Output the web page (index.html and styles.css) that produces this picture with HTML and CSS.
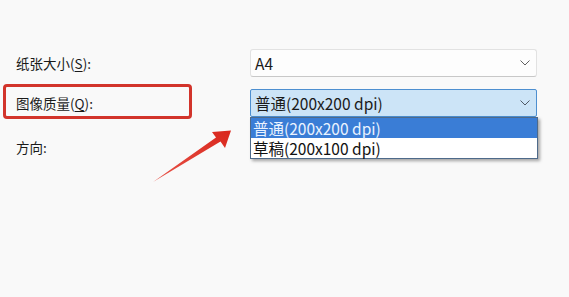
FILE: index.html
```html
<!DOCTYPE html>
<html lang="zh-CN">
<head>
<meta charset="utf-8">
<title>打印设置</title>
<link rel="stylesheet" href="styles.css">
</head>
<body>
<div class="page">
  <div class="form">
    <div class="label">纸张大小(<u>S</u>):</div>
    <div class="combo">
      <span class="value">A4</span>
      <svg class="chev" width="10" height="6" viewBox="0 0 10 6"><path d="M0.5 0.5 L5 5 L9.5 0.5" fill="none" stroke="#606060" stroke-width="1"/></svg>
    </div>
    <div class="label">图像质量(<u>Q</u>):</div>
    <div class="combo open">
      <span class="value">普通(200x200 dpi)</span>
      <svg class="chev" width="10" height="6" viewBox="0 0 10 6"><path d="M0.5 0.5 L5 5 L9.5 0.5" fill="none" stroke="#505a66" stroke-width="1"/></svg>
    </div>
    <div class="label lower">方向:</div>
    <div class="combo">
      <span class="value"></span>
      <svg class="chev" width="10" height="6" viewBox="0 0 10 6"><path d="M0.5 0.5 L5 5 L9.5 0.5" fill="none" stroke="#606060" stroke-width="1"/></svg>
    </div>
  </div>

  <div class="highlight-box"></div>

  <ul class="dropdown">
    <li class="item selected">普通(200x200 dpi)</li>
    <li class="item">草稿(200x100 dpi)</li>
  </ul>

  <svg class="arrow" width="100" height="60" viewBox="150 128 100 60">
    <defs>
      <linearGradient id="ag" x1="0" y1="1" x2="1" y2="0">
        <stop offset="0" stop-color="#e8554a"/>
        <stop offset="1" stop-color="#d9261c"/>
      </linearGradient>
    </defs>
    <polygon points="153,182 216,137.5 212,132 231,130.5 225,148 220.5,141.5" fill="url(#ag)"/>
  </svg>
</div>
</body>
</html>
```

FILE: styles.css
```css
html, body {
  margin: 0;
  padding: 0;
  background: #f9f9f9;
}

body {
  font-family: "Noto Sans CJK SC", "Noto Sans", sans-serif;
  color: #1b1b1b;
}

.page {
  position: relative;
  width: 569px;
  height: 297px;
  overflow: hidden;
}

.form {
  display: grid;
  grid-template-columns: 234px 287px;
  grid-auto-rows: 28px;
  row-gap: 12px;
  padding: 49px 0 0 16px;
}

.label {
  font-size: 13.5px;
  line-height: 28px;
  color: #1a1a1a;
  white-space: nowrap;
}

.label.lower {
  padding-top: 4px;
}

.label u {
  text-decoration-thickness: 1px;
  text-underline-offset: 2px;
}

.combo {
  box-sizing: border-box;
  display: flex;
  align-items: center;
  justify-content: space-between;
  padding: 0 6px 0 4px;
  background: #fdfdfd;
  border: 1px solid #e2e2e2;
  border-bottom-color: #c8c8c8;
  border-radius: 3px;
  font-size: 15.5px;
  line-height: 26px;
  color: #1a1a1a;
}

.combo.open {
  background: #cce4f7;
  border-color: #4d8fd0;
  border-radius: 2px;
}

.chev {
  display: block;
  flex: none;
}

.highlight-box {
  position: absolute;
  left: 3px;
  top: 84px;
  width: 189px;
  height: 35px;
  box-sizing: border-box;
  border: 3px solid #d2342b;
  border-radius: 4px;
}

.dropdown {
  position: absolute;
  left: 250px;
  top: 117px;
  width: 288px;
  box-sizing: border-box;
  margin: 0;
  padding: 0;
  list-style: none;
  background: #ffffff;
  border: 1px solid #4e6a8a;
  box-shadow: 2px 2px 3px rgba(0, 0, 0, 0.35);
}

.item {
  height: 20px;
  padding: 0 2px;
  font-size: 15.5px;
  line-height: 20px;
  color: #111;
  white-space: nowrap;
}

.item.selected {
  background: #3a7dd6;
  color: #eaf3ff;
}

.arrow {
  position: absolute;
  left: 150px;
  top: 128px;
}
```
